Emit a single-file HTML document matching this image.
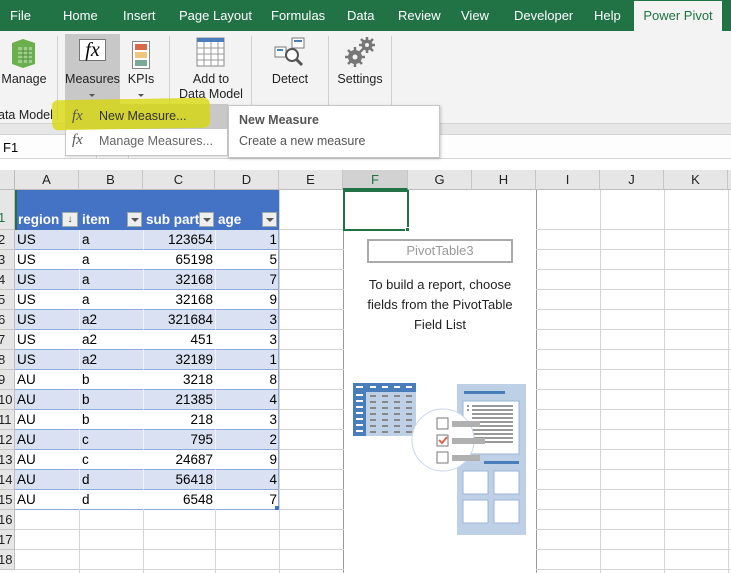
<!DOCTYPE html>
<html><head><meta charset="utf-8"><style>
*{margin:0;padding:0;box-sizing:border-box}
html,body{width:731px;height:573px;overflow:hidden}
body{background:#fff;font-family:"Liberation Sans",sans-serif;font-size:13px;color:#000;position:relative}
.a{position:absolute}
.tab{position:absolute;top:0;height:31px;line-height:31px;color:#fff;font-size:13px}
.rb{position:absolute;font-size:12.5px;color:#222;text-align:center}
.sep{position:absolute;top:36px;width:1px;height:84px;background:#d0d0d0}
.ch{position:absolute;top:170px;height:20px;line-height:20px;text-align:center;border-right:1px solid #c6c6c6;border-bottom:1px solid #bdbdbd;background:#e6e6e6;color:#222;font-size:13px}
.rh{position:absolute;left:0;width:15px;height:20px;line-height:20px;background:#e6e6e6;border-bottom:1px solid #c6c6c6;border-right:1px solid #bdbdbd;font-size:13px;color:#222;overflow:hidden;text-indent:-2px}
.vl{position:absolute;top:190px;width:1px;height:383px;background:#d4d4d4}
.hl{position:absolute;left:15px;width:716px;height:1px;background:#d4d4d4}
.row{position:absolute;left:15px;width:264px;height:20px;line-height:20px;border-bottom:1px solid #8ea9db;font-size:13.5px}
.row span{position:absolute;top:0}
.b{background:#d9e1f2}
.w{background:#fff}
.dd{position:absolute;width:15px;height:15px;border:1px solid #9aa;background:#eee;top:212px}
.dd:after{content:"";position:absolute;left:3px;top:5px;border-left:4px solid transparent;border-right:4px solid transparent;border-top:4px solid #555}
.r{width:70px;text-align:right;left:128px}
.r2{width:62px;text-align:right;left:200px}
</style></head><body>
<div class="a" style="left:0;top:0;width:731px;height:31px;background:#217346"></div>
<div class="tab" style="left:10px">File</div>
<div class="tab" style="left:63px">Home</div>
<div class="tab" style="left:123px">Insert</div>
<div class="tab" style="left:179px">Page Layout</div>
<div class="tab" style="left:271px">Formulas</div>
<div class="tab" style="left:347px">Data</div>
<div class="tab" style="left:398px">Review</div>
<div class="tab" style="left:461px">View</div>
<div class="tab" style="left:514px">Developer</div>
<div class="tab" style="left:594px">Help</div>
<div class="a" style="left:634px;top:1px;width:88px;height:30px;background:#f3f3f3;color:#217346;line-height:30px;text-align:center">Power Pivot</div>
<div class="a" style="left:0;top:31px;width:731px;height:92px;background:#f3f3f3"></div>
<div class="a" style="left:0;top:123px;width:731px;height:11px;background:#e6e6e6;border-top:1px solid #d4d4d4"></div>
<div class="a" style="left:0;top:134px;width:731px;height:25px;background:#fdfdfd;border-top:1px solid #d4d4d4;border-bottom:1px solid #d4d4d4"></div>
<div class="a" style="left:3px;top:140px;font-size:13px">F1</div>
<div class="a" style="left:96px;top:134px;width:1px;height:25px;background:#d4d4d4"></div>
<div class="a" style="left:128px;top:134px;width:1px;height:25px;background:#d4d4d4"></div>
<div class="sep" style="left:57px"></div><div class="sep" style="left:169px"></div><div class="sep" style="left:251px"></div><div class="sep" style="left:328px"></div><div class="sep" style="left:391px"></div>
<svg class="a" style="left:8px;top:37px" width="30" height="32"><path d="M4 6 L15 2 L27 6 L27 27 L15 31 L4 27Z" fill="#6ab04c"/><path d="M10 10h14v16h-14z" fill="#9fd08a"/><path d="M10 14h14M10 18h14M10 22h14M15 10v16M20 10v16" stroke="#4a8a36" stroke-width="1"/></svg>
<div class="rb" style="left:0;top:72px;width:48px">Manage</div>
<div class="a" style="left:-2px;top:108px;font-size:12.5px;color:#222">ata Model</div>
<div class="a" style="left:65px;top:34px;width:55px;height:70px;background:#c8c8c8"></div>
<div class="a" style="left:79px;top:39px;width:27px;height:22px;border:1px solid #777;background:#fff;font-family:'Liberation Serif',serif;font-style:italic;font-size:20px;line-height:20px;text-align:center">fx</div>
<div class="rb" style="left:65px;top:72px;width:55px">Measures</div>
<div class="a" style="left:89px;top:94px;border-left:3px solid transparent;border-right:3px solid transparent;border-top:3px solid #555"></div>
<div class="a" style="left:132px;top:41px;width:18px;height:28px;border:1px solid #888;background:#fff"></div>
<div class="a" style="left:135px;top:44px;width:12px;height:6px;background:#d9674a"></div>
<div class="a" style="left:135px;top:52px;width:12px;height:6px;background:#eec77a"></div>
<div class="a" style="left:135px;top:60px;width:12px;height:6px;background:#7aaa96"></div>
<div class="rb" style="left:123px;top:72px;width:36px">KPIs</div>
<div class="a" style="left:138px;top:94px;border-left:3px solid transparent;border-right:3px solid transparent;border-top:3px solid #555"></div>
<svg class="a" style="left:196px;top:37px" width="30" height="30"><rect x="1" y="1" width="27" height="28" fill="#fff" stroke="#888"/><rect x="1" y="1" width="27" height="4" fill="#4a7ebb"/><path d="M1 11h27M1 17h27M1 23h27M8 5v24M15 5v24M22 5v24" stroke="#999"/></svg>
<div class="rb" style="left:172px;top:72px;width:78px;line-height:15px">Add to<br>Data Model</div>
<svg class="a" style="left:273px;top:36px" width="34" height="32"><rect x="19" y="2" width="12" height="10" fill="#fff" stroke="#777"/><rect x="2" y="11" width="11" height="10" fill="#fff" stroke="#777"/><path d="M4 14h6M21 5h8" stroke="#4a7ebb" stroke-width="2"/><circle cx="19" cy="19" r="6" fill="#fff" stroke="#555" stroke-width="2"/><path d="M23 23l6 6" stroke="#555" stroke-width="3"/></svg>
<div class="rb" style="left:260px;top:72px;width:60px">Detect</div>
<svg class="a" style="left:345px;top:37px" width="30" height="30"><path d="M10 10v20M0 20h20M3 13l14 14M17 13l-14 14M22 0v16M14 8h16M16 2l12 12M28 2l-12 12" stroke="#777" stroke-width="2.5"/><circle cx="10" cy="20" r="7" fill="#777"/><circle cx="22" cy="8" r="5.5" fill="#777"/><circle cx="10" cy="20" r="2.5" fill="#f3f3f3"/><circle cx="22" cy="8" r="2" fill="#f3f3f3"/></svg>
<div class="rb" style="left:332px;top:72px;width:56px">Settings</div>
<div class="a" style="left:0;top:170px;width:15px;height:20px;background:#e6e6e6;border-right:1px solid #bdbdbd;border-bottom:1px solid #bdbdbd"></div>
<div class="ch" style="left:15px;width:64px">A</div>
<div class="ch" style="left:79px;width:64px">B</div>
<div class="ch" style="left:143px;width:72px">C</div>
<div class="ch" style="left:215px;width:64px">D</div>
<div class="ch" style="left:279px;width:64px">E</div>
<div class="ch" style="left:343px;width:65px;background:#d2d2d2;border-bottom:2px solid #217346;color:#217346">F</div>
<div class="ch" style="left:408px;width:64px">G</div>
<div class="ch" style="left:472px;width:64px">H</div>
<div class="ch" style="left:536px;width:64px">I</div>
<div class="ch" style="left:600px;width:64px">J</div>
<div class="ch" style="left:664px;width:64px">K</div>
<div class="ch" style="left:728px;width:10px"></div>
<div class="vl" style="left:279px"></div><div class="vl" style="left:343px;background:#999"></div><div class="vl" style="left:408px"></div><div class="vl" style="left:472px"></div><div class="vl" style="left:536px;background:#999"></div><div class="vl" style="left:600px"></div><div class="vl" style="left:664px"></div><div class="vl" style="left:728px"></div>
<div class="vl" style="left:79px;top:510px;height:63px"></div><div class="vl" style="left:143px;top:510px;height:63px"></div><div class="vl" style="left:215px;top:510px;height:63px"></div>
<div class="hl" style="top:229px"></div><div class="hl" style="top:249px"></div><div class="hl" style="top:269px"></div><div class="hl" style="top:289px"></div><div class="hl" style="top:309px"></div><div class="hl" style="top:329px"></div><div class="hl" style="top:349px"></div><div class="hl" style="top:369px"></div><div class="hl" style="top:389px"></div><div class="hl" style="top:409px"></div><div class="hl" style="top:429px"></div><div class="hl" style="top:449px"></div><div class="hl" style="top:469px"></div><div class="hl" style="top:489px"></div><div class="hl" style="top:509px"></div><div class="hl" style="top:529px"></div><div class="hl" style="top:549px"></div><div class="hl" style="top:569px"></div>
<div class="rh" style="top:190px;height:40px;line-height:56px;color:#217346">1</div>
<div class="rh" style="top:230px">2</div><div class="rh" style="top:250px">3</div><div class="rh" style="top:270px">4</div><div class="rh" style="top:290px">5</div><div class="rh" style="top:310px">6</div><div class="rh" style="top:330px">7</div><div class="rh" style="top:350px">8</div><div class="rh" style="top:370px">9</div><div class="rh" style="top:390px">10</div><div class="rh" style="top:410px">11</div><div class="rh" style="top:430px">12</div><div class="rh" style="top:450px">13</div><div class="rh" style="top:470px">14</div><div class="rh" style="top:490px">15</div><div class="rh" style="top:510px">16</div><div class="rh" style="top:530px">17</div><div class="rh" style="top:550px">18</div>
<div class="a" style="left:15px;top:190px;width:264px;height:40px;background:#4472c4;border-left:2px solid #217346"></div>
<div class="a" style="left:18px;top:212px;color:#fff;font-weight:bold;font-size:13.5px">region</div>
<div class="a" style="left:82px;top:212px;color:#fff;font-weight:bold;font-size:13.5px">item</div>
<div class="a" style="left:146px;top:212px;color:#fff;font-weight:bold;font-size:13.5px">sub part</div>
<div class="a" style="left:218px;top:212px;color:#fff;font-weight:bold;font-size:13.5px">age</div>
<div class="a" style="left:62px;top:212px;width:16px;height:15px;border:1px solid #9aa;background:#eee;font-size:10px;line-height:13px;text-align:center;color:#444">↓</div>
<div class="dd" style="left:127px"></div><div class="dd" style="left:199px"></div><div class="dd" style="left:262px"></div>
<div class="row b" style="top:230px"><span style="left:2px">US</span><span style="left:67px">a</span><span class="r">123654</span><span class="r2">1</span></div>
<div class="row w" style="top:250px"><span style="left:2px">US</span><span style="left:67px">a</span><span class="r">65198</span><span class="r2">5</span></div>
<div class="row b" style="top:270px"><span style="left:2px">US</span><span style="left:67px">a</span><span class="r">32168</span><span class="r2">7</span></div>
<div class="row w" style="top:290px"><span style="left:2px">US</span><span style="left:67px">a</span><span class="r">32168</span><span class="r2">9</span></div>
<div class="row b" style="top:310px"><span style="left:2px">US</span><span style="left:67px">a2</span><span class="r">321684</span><span class="r2">3</span></div>
<div class="row w" style="top:330px"><span style="left:2px">US</span><span style="left:67px">a2</span><span class="r">451</span><span class="r2">3</span></div>
<div class="row b" style="top:350px"><span style="left:2px">US</span><span style="left:67px">a2</span><span class="r">32189</span><span class="r2">1</span></div>
<div class="row w" style="top:370px"><span style="left:2px">AU</span><span style="left:67px">b</span><span class="r">3218</span><span class="r2">8</span></div>
<div class="row b" style="top:390px"><span style="left:2px">AU</span><span style="left:67px">b</span><span class="r">21385</span><span class="r2">4</span></div>
<div class="row w" style="top:410px"><span style="left:2px">AU</span><span style="left:67px">b</span><span class="r">218</span><span class="r2">3</span></div>
<div class="row b" style="top:430px"><span style="left:2px">AU</span><span style="left:67px">c</span><span class="r">795</span><span class="r2">2</span></div>
<div class="row w" style="top:450px"><span style="left:2px">AU</span><span style="left:67px">c</span><span class="r">24687</span><span class="r2">9</span></div>
<div class="row b" style="top:470px"><span style="left:2px">AU</span><span style="left:67px">d</span><span class="r">56418</span><span class="r2">4</span></div>
<div class="row w" style="top:490px"><span style="left:2px">AU</span><span style="left:67px">d</span><span class="r">6548</span><span class="r2">7</span></div>
<div class="a" style="left:79px;top:230px;width:1px;height:280px;background:#fff;opacity:.6"></div>
<div class="a" style="left:143px;top:230px;width:1px;height:280px;background:#fff;opacity:.6"></div>
<div class="a" style="left:215px;top:230px;width:1px;height:280px;background:#fff;opacity:.6"></div>
<div class="a" style="left:278px;top:230px;width:1px;height:280px;background:#8ea9db"></div>
<div class="a" style="left:275px;top:506px;width:4px;height:4px;background:#4472c4"></div>
<div class="a" style="left:344px;top:190px;width:192px;height:383px;background:#fff"></div>
<div class="a" style="left:343px;top:190px;width:66px;height:41px;border:2px solid #217346"></div>
<div class="a" style="left:405px;top:227px;width:5px;height:5px;background:#217346;border:1px solid #fff"></div>
<div class="a" style="left:367px;top:239px;width:146px;height:24px;border:2px solid #aaa;color:#999;text-align:center;line-height:20px;font-size:13px">PivotTable3</div>
<div class="a" style="left:344px;top:275px;width:192px;text-align:center;font-size:13px;line-height:20px;color:#222">To build a report, choose<br>fields from the PivotTable<br>Field List</div>
<svg class="a" style="left:353px;top:383px" width="175" height="155">
<rect x="0" y="0" width="63" height="53" fill="#bdd0e6"/><rect x="0" y="0" width="63" height="9" fill="#4a7ebb"/><rect x="0" y="0" width="13" height="53" fill="#4a7ebb"/>
<path d="M3 4h7M17 4h6M29 4h6M41 4h6M53 4h6M3 12h7M3 18h7M3 24h7M3 30h7M3 36h7M3 42h7M3 48h7" stroke="#fff" stroke-width="2"/>
<path d="M17 13h42M17 19h42M17 25h42M17 31h42M17 37h42M17 43h42M17 49h42" stroke="#888" stroke-width="2" stroke-dasharray="6 6"/>
<rect x="104" y="1" width="69" height="151" fill="#bdd0e6"/><rect x="111" y="8" width="41" height="3" fill="#4a7ebb"/>
<rect x="110" y="18" width="56" height="53" fill="#fff" stroke="#9ab5d6"/>
<path d="M114 23h2M119 23h41M114 27h2M119 27h41M119 31h41M119 35h41M119 39h41M119 43h41M119 47h41M119 51h41M119 55h41M119 59h41" stroke="#999" stroke-width="2"/>
<rect x="131" y="78" width="35" height="3" fill="#4a7ebb"/>
<rect x="110" y="88" width="25" height="23" fill="#fff" stroke="#9ab5d6"/><rect x="141" y="88" width="25" height="23" fill="#fff" stroke="#9ab5d6"/><rect x="110" y="117" width="25" height="23" fill="#fff" stroke="#9ab5d6"/><rect x="141" y="117" width="25" height="23" fill="#fff" stroke="#9ab5d6"/>
<circle cx="90" cy="57" r="31" fill="#fff" stroke="#c9d7ea"/>
<rect x="84" y="35" width="11" height="11" fill="#fff" stroke="#777"/><rect x="84" y="52" width="11" height="11" fill="#fff" stroke="#777"/><rect x="84" y="69" width="11" height="11" fill="#fff" stroke="#777"/>
<path d="M86 57l3 3 5-6" stroke="#d9674a" stroke-width="2" fill="none"/>
<rect x="99" y="38" width="28" height="6" fill="#b0b0b0"/><rect x="99" y="55" width="33" height="6" fill="#b0b0b0"/><rect x="99" y="72" width="28" height="6" fill="#b0b0b0"/>
</svg>
<!-- dropdown menu -->
<div class="a" style="left:65px;top:104px;width:163px;height:52px;background:#fff;border:1px solid #c6c6c6;box-shadow:1px 1px 2px rgba(0,0,0,.15)"></div>
<div class="a" style="left:66px;top:105px;width:161px;height:24px;background:#c8c8c8"></div>
<div class="a" style="left:52px;top:99px;width:158px;height:30px;background:rgba(215,215,0,.75);border-radius:6px;transform:rotate(-1deg)"></div>
<div class="a" style="left:72px;top:108px;font-family:'Liberation Serif',serif;font-style:italic;font-size:15px;color:#555">fx</div>
<div class="a" style="left:99px;top:109px;font-size:12.5px;color:#333">New Measure...</div>
<div class="a" style="left:72px;top:132px;font-family:'Liberation Serif',serif;font-style:italic;font-size:15px;color:#555">fx</div>
<div class="a" style="left:99px;top:134px;font-size:12.5px;color:#666">Manage Measures...</div>
<!-- tooltip -->
<div class="a" style="left:228px;top:105px;width:212px;height:53px;background:#fff;border:1px solid #c6c6c6;box-shadow:1px 1px 3px rgba(0,0,0,.2)"></div>
<div class="a" style="left:239px;top:113px;font-size:12.5px;font-weight:bold;color:#555">New Measure</div>
<div class="a" style="left:239px;top:134px;font-size:12.5px;color:#555">Create a new measure</div>
</body></html>
